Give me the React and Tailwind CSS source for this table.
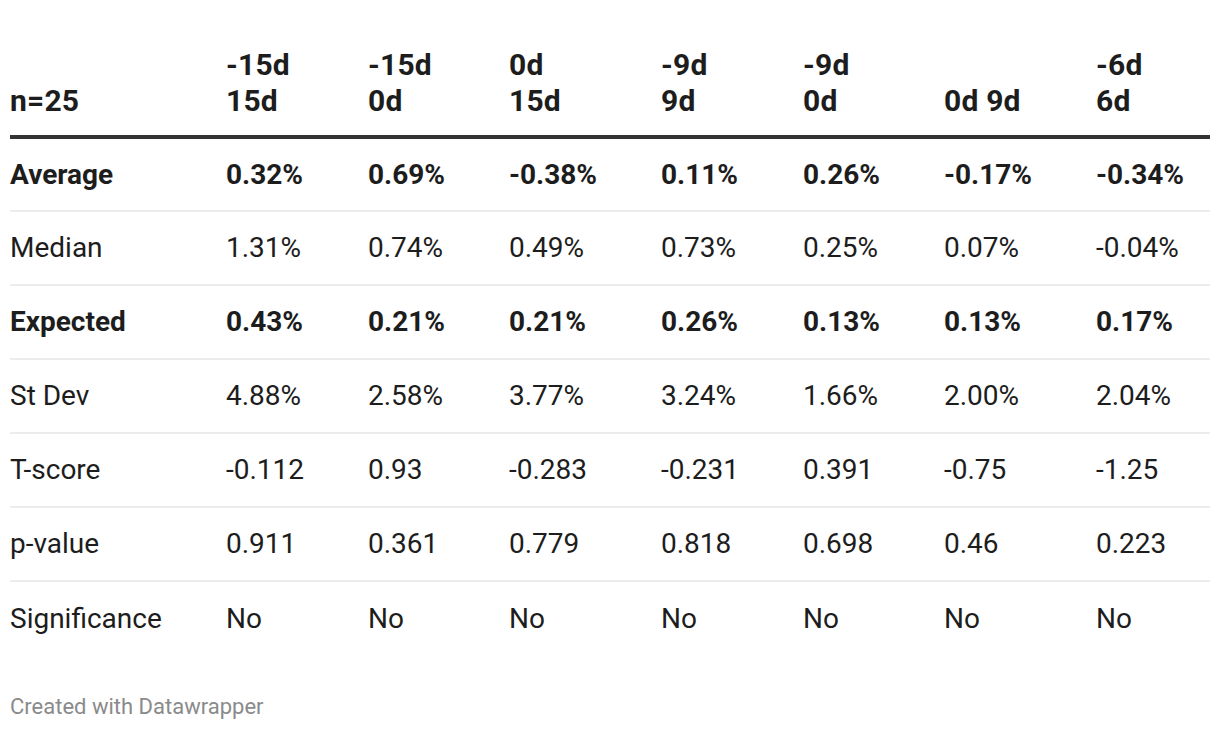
import React from "react";

const cols = [
  { w: "w-[216px]", head: ["n=25"] },
  { w: "w-[142px]", head: ["-15d", "15d"] },
  { w: "w-[141px]", head: ["-15d", "0d"] },
  { w: "w-[152px]", head: ["0d", "15d"] },
  { w: "w-[142px]", head: ["-9d", "9d"] },
  { w: "w-[141px]", head: ["-9d", "0d"] },
  { w: "w-[152px]", head: ["0d 9d"] },
  { w: "w-[114px]", head: ["-6d", "6d"] },
];

const rows = [
  { bold: true, cells: ["Average", "0.32%", "0.69%", "-0.38%", "0.11%", "0.26%", "-0.17%", "-0.34%"] },
  { cells: ["Median", "1.31%", "0.74%", "0.49%", "0.73%", "0.25%", "0.07%", "-0.04%"] },
  { bold: true, cells: ["Expected", "0.43%", "0.21%", "0.21%", "0.26%", "0.13%", "0.13%", "0.17%"] },
  { cells: ["St Dev", "4.88%", "2.58%", "3.77%", "3.24%", "1.66%", "2.00%", "2.04%"] },
  { cells: ["T-score", "-0.112", "0.93", "-0.283", "-0.231", "0.391", "-0.75", "-1.25"] },
  { cells: ["p-value", "0.911", "0.361", "0.779", "0.818", "0.698", "0.46", "0.223"] },
  { cells: ["Significance", "No", "No", "No", "No", "No", "No", "No"] },
];

export default function App() {
  return (
    <div
      className="w-[1220px] h-[730px] bg-white px-[10px] pt-[47px] text-[#1d1d1d]"
      style={{ fontFamily: "Roboto, sans-serif" }}
    >
      <table className="w-[1200px] border-collapse table-fixed">
        <thead>
          <tr className="border-b-[4px] border-[#333333]">
            {cols.map((c, i) => (
              <th
                key={i}
                className={`${c.w} p-0 pb-[16px] text-left align-bottom font-bold text-[30px] leading-[36px] tracking-[0.2px]`}
              >
                {c.head.map((h, j) => (
                  <div key={j}>{h}</div>
                ))}
              </th>
            ))}
          </tr>
        </thead>
        <tbody>
          {rows.map((r, i) => (
            <tr
              key={i}
              className={i < rows.length - 1 ? "border-b-2 border-[#ececec]" : ""}
            >
              {r.cells.map((c, j) => (
                <td
                  key={j}
                  className={`p-0 h-[74px] align-middle text-[28px] leading-[36px] ${
                    r.bold ? "font-bold" : "font-normal"
                  }`}
                >
                  {c}
                </td>
              ))}
            </tr>
          ))}
        </tbody>
      </table>
      <div className="mt-[37px] text-[22px] leading-[30px] text-[#8a8a8a]">
        Created with Datawrapper
      </div>
    </div>
  );
}
